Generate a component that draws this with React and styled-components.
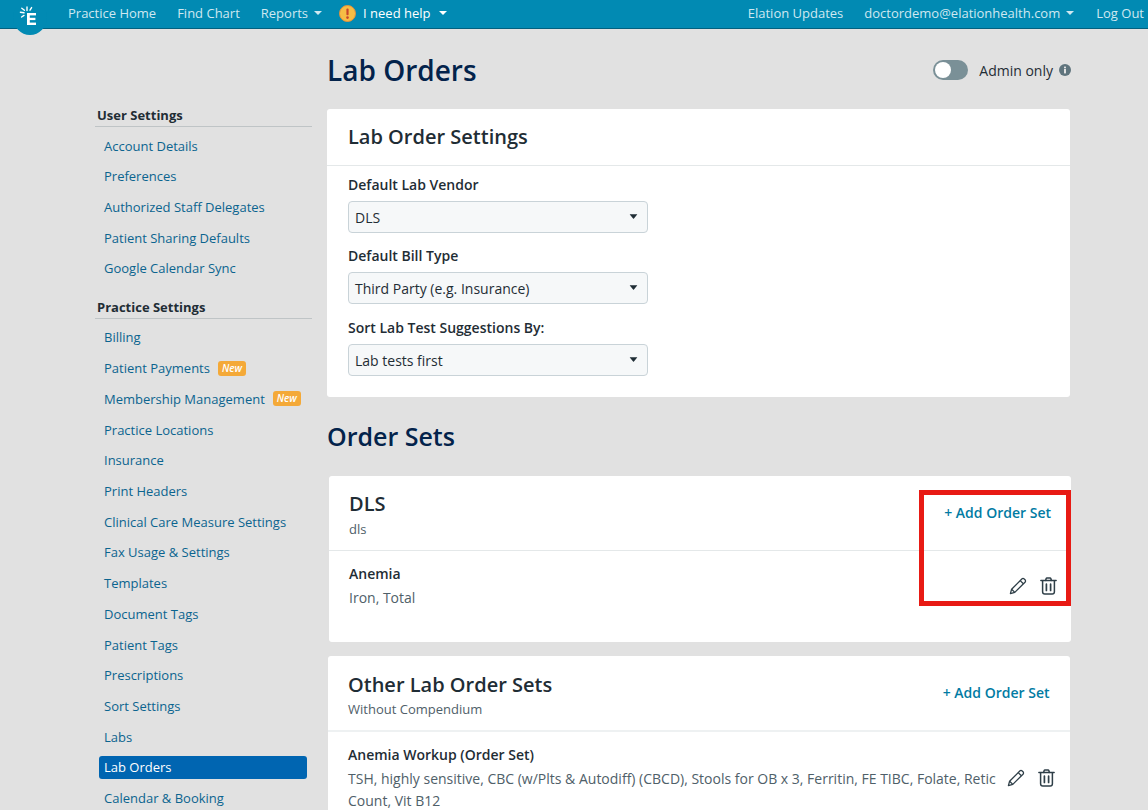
import React from "react";
import styled, { createGlobalStyle } from "styled-components";
import { AiFillCaretDown } from "react-icons/ai";

const userLinks = [
  "Account Details",
  "Preferences",
  "Authorized Staff Delegates",
  "Patient Sharing Defaults",
  "Google Calendar Sync",
];

const practiceLinks = [
  { label: "Billing" },
  { label: "Patient Payments", isNew: true },
  { label: "Membership Management", isNew: true },
  { label: "Practice Locations" },
  { label: "Insurance" },
  { label: "Print Headers" },
  { label: "Clinical Care Measure Settings" },
  { label: "Fax Usage & Settings" },
  { label: "Templates" },
  { label: "Document Tags" },
  { label: "Patient Tags" },
  { label: "Prescriptions" },
  { label: "Sort Settings" },
  { label: "Labs" },
  { label: "Lab Orders", active: true },
  { label: "Calendar & Booking" },
];

const selects = [
  { label: "Default Lab Vendor", value: "DLS" },
  { label: "Default Bill Type", value: "Third Party (e.g. Insurance)" },
  { label: "Sort Lab Test Suggestions By:", value: "Lab tests first" },
];

function Logo() {
  return (
    <LogoBadge>
      <svg width="24" height="24" viewBox="0 0 24 24" fill="#fff">
        <rect x="9" y="8" width="2.8" height="12" />
        <rect x="9" y="8" width="9" height="2.4" />
        <rect x="9" y="12.8" width="8.4" height="2.3" />
        <rect x="9" y="17.6" width="9" height="2.4" />
        <g stroke="#fff" strokeWidth="1.4" strokeLinecap="round">
          <line x1="9" y1="2" x2="9" y2="5.6" />
          <line x1="2.4" y1="7.2" x2="6" y2="7.8" />
          <line x1="3.8" y1="3.2" x2="6.4" y2="5.2" />
          <line x1="13.6" y1="2.6" x2="12" y2="5.2" />
          <line x1="3.6" y1="12" x2="6" y2="10.4" />
        </g>
      </svg>
    </LogoBadge>
  );
}

function AlertIcon() {
  return (
    <svg width="17" height="17" viewBox="0 0 17 17">
      <circle cx="8.5" cy="8.5" r="8" fill="#f6bd45" stroke="#e8913a" />
      <rect x="7.4" y="3.4" width="2.2" height="6.8" rx="1" fill="#c8452c" />
      <circle cx="8.5" cy="12.6" r="1.3" fill="#c8452c" />
    </svg>
  );
}

function PencilIcon() {
  return (
    <svg width="18" height="18" viewBox="0 0 18 18" fill="none" stroke="#2f3f48" strokeWidth="1.3" strokeLinejoin="round">
      <path d="M1.4 16.6l1.2-4.4L12.8 2c.7-.7 1.7-.7 2.4 0l.8.8c.7.7.7 1.7 0 2.4L5.8 15.4z" />
      <path d="M11.2 3.6l3.2 3.2" />
      <path d="M2.6 12.2l3.2 3.2" />
    </svg>
  );
}

function TrashIcon() {
  return (
    <svg width="17" height="18" viewBox="0 0 17 18" fill="none" stroke="#2f3f48" strokeWidth="1.5" strokeLinecap="round" strokeLinejoin="round">
      <path d="M.9 3.6h15.2" />
      <path d="M5.6 3.4l.6-1.9c.1-.3.3-.5.7-.5h3.2c.4 0 .6.2.7.5l.6 1.9" />
      <path d="M2.6 3.8v10.9c0 1.3.9 2.3 2.2 2.3h7.4c1.3 0 2.2-1 2.2-2.3V3.8" />
      <path d="M6.4 7.2v6.2M10.6 7.2v6.2" strokeWidth="1.7" />
    </svg>
  );
}

function InfoIcon() {
  return (
    <svg width="12" height="12" viewBox="0 0 12 12">
      <circle cx="6" cy="6" r="6" fill="#5f747d" />
      <rect x="5" y="5" width="2" height="4.4" fill="#e2e2e2" />
      <rect x="5" y="2.6" width="2" height="1.7" fill="#e2e2e2" />
    </svg>
  );
}

export default function App() {
  return (
    <>
      <GlobalStyle />
      <TopBar>
        <Logo />
        <NavLink>Practice Home</NavLink>
        <NavLink>Find Chart</NavLink>
        <NavLink>
          Reports <Caret />
        </NavLink>
        <HelpLink>
          <AlertIcon />
          I need help <Caret />
        </HelpLink>
        <NavSpacer />
        <NavLink>Elation Updates</NavLink>
        <NavLink>
          doctordemo@elationhealth.com <Caret />
        </NavLink>
        <LogOut>Log Out</LogOut>
      </TopBar>

      <Page>
        <Sidebar>
          <SideHeading>User Settings</SideHeading>
          {userLinks.map((label) => (
            <SideItem key={label}>{label}</SideItem>
          ))}
          <SideHeading $second>Practice Settings</SideHeading>
          {practiceLinks.map((link) => (
            <SideItem key={link.label} $active={link.active}>
              {link.label}
              {link.isNew && <NewBadge>New</NewBadge>}
            </SideItem>
          ))}
        </Sidebar>

        <Main>
          <TitleRow>
            <PageTitle>Lab Orders</PageTitle>
            <AdminOnly>
              <Toggle />
              <span>Admin only</span>
              <InfoIcon />
            </AdminOnly>
          </TitleRow>

          <SettingsCard>
            <SettingsHeader>Lab Order Settings</SettingsHeader>
            <SettingsBody>
              {selects.map((s) => (
                <Field key={s.label}>
                  <FieldLabel>{s.label}</FieldLabel>
                  <SelectBox>
                    {s.value}
                    <SelectCaret />
                  </SelectBox>
                </Field>
              ))}
            </SettingsBody>
          </SettingsCard>

          <SectionTitle>Order Sets</SectionTitle>

          <SetCard $left={2} $right={-1}>
            <SetHeader $pad={14} $height={75} $rightPad={20}>
              <div>
                <SetName>DLS</SetName>
                <SetSub $top={2}>dls</SetSub>
              </div>
              <AddLink $top={12}>+ Add Order Set</AddLink>
            </SetHeader>
            <SetRow $height={91} $top={13} $rightPad={14}>
              <RowText>
                <RowName>Anemia</RowName>
                <RowDetail>Iron, Total</RowDetail>
              </RowText>
              <RowIcons $top={13}>
                <PencilIcon />
                <TrashIcon />
              </RowIcons>
            </SetRow>
            <Highlight />
          </SetCard>

          <SetCard $left={1} $right={0} $gap={14}>
            <SetHeader $pad={15} $height={76} $rightPad={20.5} $thick>
              <div>
                <SetName>Other Lab Order Sets</SetName>
                <SetSub $top={1}>Without Compendium</SetSub>
              </div>
              <AddLink $top={11}>+ Add Order Set</AddLink>
            </SetHeader>
            <SetRow $height={90} $top={13} $rightPad={15}>
              <RowText>
                <RowName>Anemia Workup (Order Set)</RowName>
                <RowDetail>
                  TSH, highly sensitive, CBC (w/Plts &amp; Autodiff) (CBCD), Stools for OB x 3, Ferritin, FE TIBC, Folate, Retic Count, Vit B12
                </RowDetail>
              </RowText>
              <RowIcons $top={24}>
                <PencilIcon />
                <TrashIcon />
              </RowIcons>
            </SetRow>
          </SetCard>
        </Main>
      </Page>
    </>
  );
}

// Styling
const GlobalStyle = createGlobalStyle`
  html, body {
    margin: 0;
    height: 810px;
    overflow: hidden;
    background: #e1e1e1;
  }
  body, #root {
    font-family: "Open Sans", "Liberation Sans", sans-serif;
  }
  * {
    box-sizing: border-box;
  }
`;

const TopBar = styled.header`
  height: 29px;
  background: #018ab3;
  border-bottom: 1px solid #02607f;
  display: flex;
  align-items: center;
  padding: 0 4px 2px 0;
  font-size: 13px;
  gap: 21px;
`;

const LogoBadge = styled.div`
  width: 34px;
  height: 35px;
  margin: 0 0 0 13px;
  align-self: flex-start;
  border-radius: 50%;
  background: #018ab3;
  display: flex;
  justify-content: center;
  padding-top: 5px;
  flex: none;
`;

const NavLink = styled.span`
  color: #cfe8f1;
  display: flex;
  align-items: center;
  gap: 4px;
  white-space: nowrap;
`;

const HelpLink = styled(NavLink)`
  color: #fff;
  gap: 7px;
  margin-left: -4px;
`;

const LogOut = styled(NavLink)`
  margin-left: 1px;
`;

const NavSpacer = styled.div`
  flex: 1;
`;

const Caret = styled.i`
  display: inline-block;
  width: 0;
  height: 0;
  margin-left: 2px;
  border-left: 4px solid transparent;
  border-right: 4px solid transparent;
  border-top: 4px solid currentColor;
`;

const Page = styled.div`
  display: flex;
  padding-left: 95px;
`;

const Sidebar = styled.nav`
  width: 217px;
  flex: none;
  padding-top: 78px;
  font-size: 13px;
`;

const SideHeading = styled.h4`
  margin: ${(p) => (p.$second ? "19px" : "0")} 0 7px;
  height: 20px;
  padding-left: 2px;
  line-height: 17px;
  font-size: 13px;
  font-weight: 700;
  color: #1f2d35;
  border-bottom: 1px solid #bfc4c6;
`;

const SideItem = styled.div`
  height: 23px;
  margin: 0 5px 7.72px 4px;
  padding-left: 5px;
  line-height: 22px;
  border-radius: 3px;
  color: ${(p) => (p.$active ? "#fff" : "#0b648f")};
  background: ${(p) => (p.$active ? "#0065b1" : "transparent")};
  display: flex;
  align-items: center;
  white-space: nowrap;
`;

const NewBadge = styled.span`
  margin-left: 8px;
  padding: 0 4px;
  height: 15px;
  line-height: 14px;
  font-size: 10px;
  font-style: italic;
  font-weight: 600;
  color: #fff;
  background: #f4a938;
  border-radius: 3px;
`;

const Main = styled.main`
  width: 743px;
  margin-left: 15px;
  flex: none;
`;

const TitleRow = styled.div`
  height: 80px;
  display: flex;
  align-items: center;
  justify-content: space-between;
  padding-top: 2px;
`;

const PageTitle = styled.h1`
  margin: 0;
  font-size: 28px;
  font-weight: 600;
  color: #03234b;
`;

const AdminOnly = styled.div`
  display: flex;
  align-items: center;
  gap: 11px;
  margin-right: -1px;
  font-size: 14px;
  color: #1f2d35;

  svg {
    margin-left: -5px;
  }
`;

const Toggle = styled.div`
  position: relative;
  width: 35px;
  height: 20px;
  border-radius: 10px;
  background: #7a9097;
  &::after {
    content: "";
    position: absolute;
    left: 2px;
    top: 2px;
    width: 16px;
    height: 16px;
    border-radius: 50%;
    background: #fff;
  }
`;

const SettingsCard = styled.section`
  background: #fff;
  border-radius: 3px;
  height: 288px;
`;

const SettingsHeader = styled.h2`
  margin: 0;
  height: 57px;
  padding: 14px 21px 0;
  font-size: 20px;
  font-weight: 600;
  line-height: 28px;
  color: #1f2d35;
  border-bottom: 1px solid #e4e8e9;
`;

const SettingsBody = styled.div`
  padding: 8px 21px 0;
  display: flex;
  flex-direction: column;
  gap: 12.25px;
`;

const Field = styled.div`
  display: flex;
  flex-direction: column;
  gap: 5px;
`;

const FieldLabel = styled.label`
  font-size: 14px;
  line-height: 22px;
  font-weight: 600;
  color: #1f2d35;
`;

const SelectBox = styled.div`
  position: relative;
  width: 300px;
  height: 32px;
  border: 1px solid #c9d3d8;
  border-radius: 4px;
  background: #f6f8f9;
  padding: 0 6px;
  font-size: 14px;
  line-height: 31px;
  color: #1f2d35;
`;

const SelectCaret = styled(AiFillCaretDown).attrs({ size: 11 })`
  position: absolute;
  right: 8px;
  top: 9px;
  color: #1f2d35;
`;

const SectionTitle = styled.h2`
  margin: 22px 0 22px;
  font-size: 25px;
  line-height: 35px;
  font-weight: 600;
  color: #03234b;
`;

const SetCard = styled.section`
  position: relative;
  background: #fff;
  border-radius: 3px;
  margin-left: ${(p) => p.$left}px;
  margin-right: ${(p) => p.$right}px;
  margin-top: ${(p) => p.$gap || 0}px;
`;

const SetHeader = styled.div`
  height: ${(p) => p.$height}px;
  padding: ${(p) => p.$pad}px ${(p) => p.$rightPad}px 0 20px;
  display: flex;
  justify-content: space-between;
  border-bottom: ${(p) => (p.$thick ? "2px solid #eef1f2" : "1px solid #e4e8e9")};
`;

const SetName = styled.div`
  font-size: 20px;
  line-height: 28px;
  font-weight: 600;
  color: #1f2d35;
`;

const SetSub = styled.div`
  font-size: 13px;
  line-height: 18px;
  margin-top: ${(p) => p.$top}px;
  color: #4f6069;
`;

const AddLink = styled.a`
  font-size: 14px;
  font-weight: 600;
  line-height: 22px;
  color: #017ba3;
  white-space: nowrap;
  padding-top: ${(p) => p.$top}px;
`;

const SetRow = styled.div`
  height: ${(p) => p.$height}px;
  padding: ${(p) => p.$top}px ${(p) => p.$rightPad}px 0 20px;
  display: flex;
  gap: 10px;
`;

const RowText = styled.div`
  flex: 1;
  min-width: 0;
`;

const RowName = styled.div`
  font-size: 14px;
  line-height: 20px;
  font-weight: 600;
  color: #1f2d35;
`;

const RowDetail = styled.div`
  font-size: 14px;
  line-height: 22px;
  margin-top: 3px;
  color: #4f6069;
`;

const RowIcons = styled.div`
  display: flex;
  gap: 13px;
  padding-top: ${(p) => p.$top}px;
  flex: none;
`;

const Highlight = styled.div`
  position: absolute;
  left: 590px;
  top: 14px;
  width: 152px;
  height: 116px;
  border: 5px solid #e81a14;
  pointer-events: none;
`;
